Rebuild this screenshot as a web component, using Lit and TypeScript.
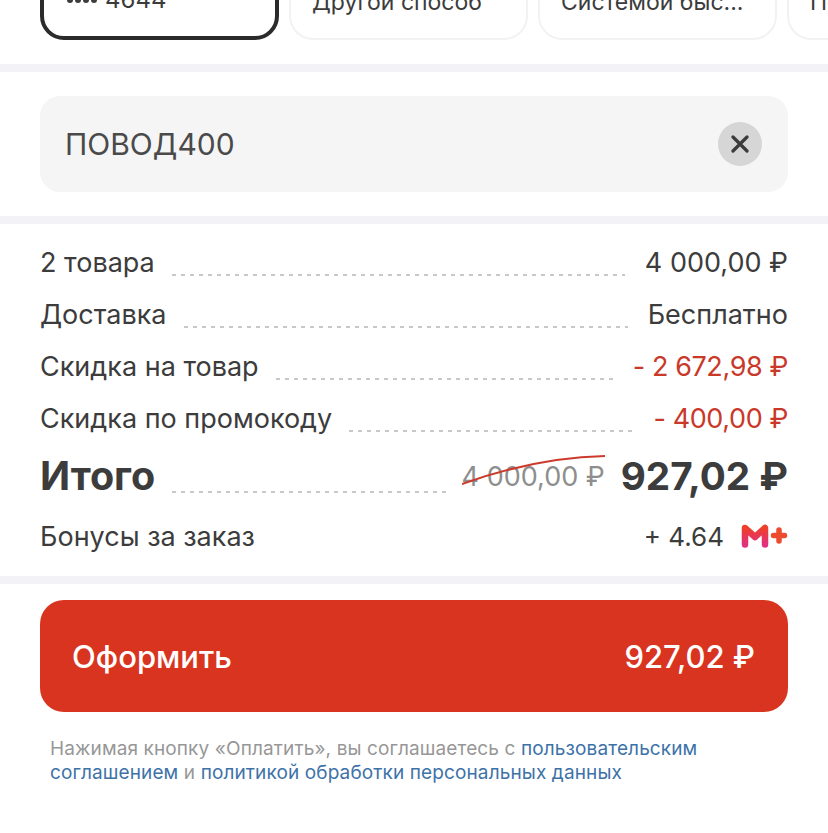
import { LitElement, html, css } from "lit";
import { customElement } from "lit/decorators.js";

interface Row {
  label: string;
  value: string;
  discount?: boolean;
}

const ROWS: Row[] = [
  { label: "2 товара", value: "4 000,00 ₽" },
  { label: "Доставка", value: "Бесплатно" },
  { label: "Скидка на товар", value: "- 2 672,98 ₽", discount: true },
  { label: "Скидка по промокоду", value: "- 400,00 ₽", discount: true },
];

@customElement("app-root")
export class AppRoot extends LitElement {
  static styles = css`
    :host {
      display: block;
      width: 828px;
      height: 833px;
      overflow: hidden;
      background: #fff;
      font-family: Inter, Roboto, sans-serif;
      color: #3c3c3c;
    }
    .methods {
      height: 64px;
      overflow: hidden;
      border-bottom: 8px solid #f2f2f7;
    }
    .tabs {
      display: flex;
      gap: 10px;
      margin-top: -40px;
      padding-left: 40px;
      width: 1100px;
    }
    .tab {
      box-sizing: border-box;
      flex: none;
      width: 239px;
      height: 80px;
      padding: 26px 0 0 21px;
      border: 2px solid #f2f2f2;
      border-radius: 24px;
      font-size: 23px;
      line-height: 28px;
      color: #3c3c3c;
      white-space: nowrap;
    }
    .tab.active {
      display: flex;
      align-items: center;
      gap: 8px;
      padding: 0 0 0 23px;
      border: 4px solid #2b2b2b;
      font-size: 24px;
    }
    .pin {
      display: flex;
      gap: 2px;
    }
    .pin i {
      width: 6px;
      height: 6px;
      border-radius: 50%;
      background: #3c3c3c;
    }
    .promo-section {
      padding: 24px 40px;
      border-bottom: 8px solid #f2f2f7;
    }
    .promo {
      display: flex;
      align-items: center;
      justify-content: space-between;
      height: 96px;
      padding: 0 26px 0 25px;
      border-radius: 20px;
      background: #f5f5f5;
      font-size: 30px;
      color: #4a4a4a;
    }
    .clear {
      display: flex;
      align-items: center;
      justify-content: center;
      width: 44px;
      height: 44px;
      border-radius: 50%;
      background: #d6d6d6;
    }
    .summary {
      box-sizing: border-box;
      height: 360px;
      padding: 12px 40px 0;
      border-bottom: 8px solid #f2f2f7;
    }
    .row {
      display: flex;
      align-items: center;
      height: 52px;
      font-size: 27px;
    }
    .dots {
      flex: 1;
      height: 2px;
      margin: 26px 20px 0 17px;
      background: repeating-linear-gradient(to right, #c8c8c8 0 4px, transparent 4px 9px);
    }
    .discount {
      color: #c9392a;
      letter-spacing: -0.4px;
    }
    .total {
      display: flex;
      align-items: center;
      height: 64px;
    }
    .total-label {
      font-size: 39.5px;
      font-weight: 700;
    }
    .total .dots {
      margin: 32px 15px 0 17px;
    }
    .old {
      position: relative;
      font-size: 27px;
      color: #8e8e8e;
    }
    .strike {
      position: absolute;
      left: 0;
      top: -6px;
    }
    .new {
      margin-left: 16px;
      font-size: 38.7px;
      font-weight: 700;
    }
    .bonus {
      display: flex;
      align-items: center;
      height: 56px;
      font-size: 27px;
    }
    .bonus-label {
      flex: 1;
    }
    .bonus-value {
      font-size: 26px;
    }
    .bonus svg {
      margin-left: 17px;
    }
    .checkout {
      padding: 16px 40px 0;
    }
    .pay {
      display: flex;
      align-items: center;
      justify-content: space-between;
      height: 112px;
      padding: 0 33px 0 32px;
      border-radius: 24px;
      background: #d9341f;
      color: #fff;
      font-size: 31px;
      font-weight: 500;
    }
    .legal {
      margin: 25px 0 0 10px;
      font-size: 19px;
      line-height: 24px;
      letter-spacing: 0.12px;
      color: #979797;
    }
    .legal a {
      color: #3d72a8;
      text-decoration: none;
    }
  `;

  render() {
    return html`
      <section class="methods">
        <div class="tabs">
          <div class="tab active">
            <span class="pin"><i></i><i></i><i></i><i></i></span>
            <span>4644</span>
          </div>
          <div class="tab">Другой способ</div>
          <div class="tab">Системой быс...</div>
          <div class="tab">Подели</div>
        </div>
      </section>

      <section class="promo-section">
        <div class="promo">
          <span>ПОВОД400</span>
          <span class="clear">
            <svg width="18" height="18" viewBox="0 0 18 18">
              <path d="M2 2 L16 16 M16 2 L2 16" stroke="#3c3c3c" stroke-width="3.2" stroke-linecap="round" />
            </svg>
          </span>
        </div>
      </section>

      <section class="summary">
        ${ROWS.map(
          (r) => html`
            <div class="row">
              <span>${r.label}</span>
              <span class="dots"></span>
              <span class=${r.discount ? "discount" : ""}>${r.value}</span>
            </div>
          `
        )}
        <div class="total">
          <span class="total-label">Итого</span>
          <span class="dots"></span>
          <span class="old">
            4 000,00 ₽
            <svg class="strike" width="144" height="32" viewBox="0 0 144 32" fill="none">
              <path d="M0 30 C 45 14, 90 3, 143 2" stroke="#cc3a2c" stroke-width="2" />
            </svg>
          </span>
          <span class="new">927,02 ₽</span>
        </div>
        <div class="bonus">
          <span class="bonus-label">Бонусы за заказ</span>
          <span class="bonus-value">+ 4.64</span>
          <svg width="47" height="24" viewBox="0 0 47 24" fill="none">
            <defs>
              <linearGradient id="mark" x1="0" y1="0" x2="0" y2="1">
                <stop offset="0" stop-color="#ee3f2c" />
                <stop offset="1" stop-color="#e0307e" />
              </linearGradient>
            </defs>
            <path d="M4 20.5 V4 L14 13 L24 4 V20.5" stroke="url(#mark)" stroke-width="6.5" stroke-linecap="round" stroke-linejoin="round" />
            <path d="M38 6 V17 M32.5 11.5 H43.5" stroke="#ee4a2e" stroke-width="5.5" stroke-linecap="round" />
          </svg>
        </div>
      </section>

      <section class="checkout">
        <div class="pay"><span>Оформить</span><span>927,02 ₽</span></div>
        <p class="legal">
          Нажимая кнопку «Оплатить», вы соглашаетесь с <a>пользовательским соглашением</a> и
          <a>политикой обработки персональных данных</a>
        </p>
      </section>
    `;
  }
}
